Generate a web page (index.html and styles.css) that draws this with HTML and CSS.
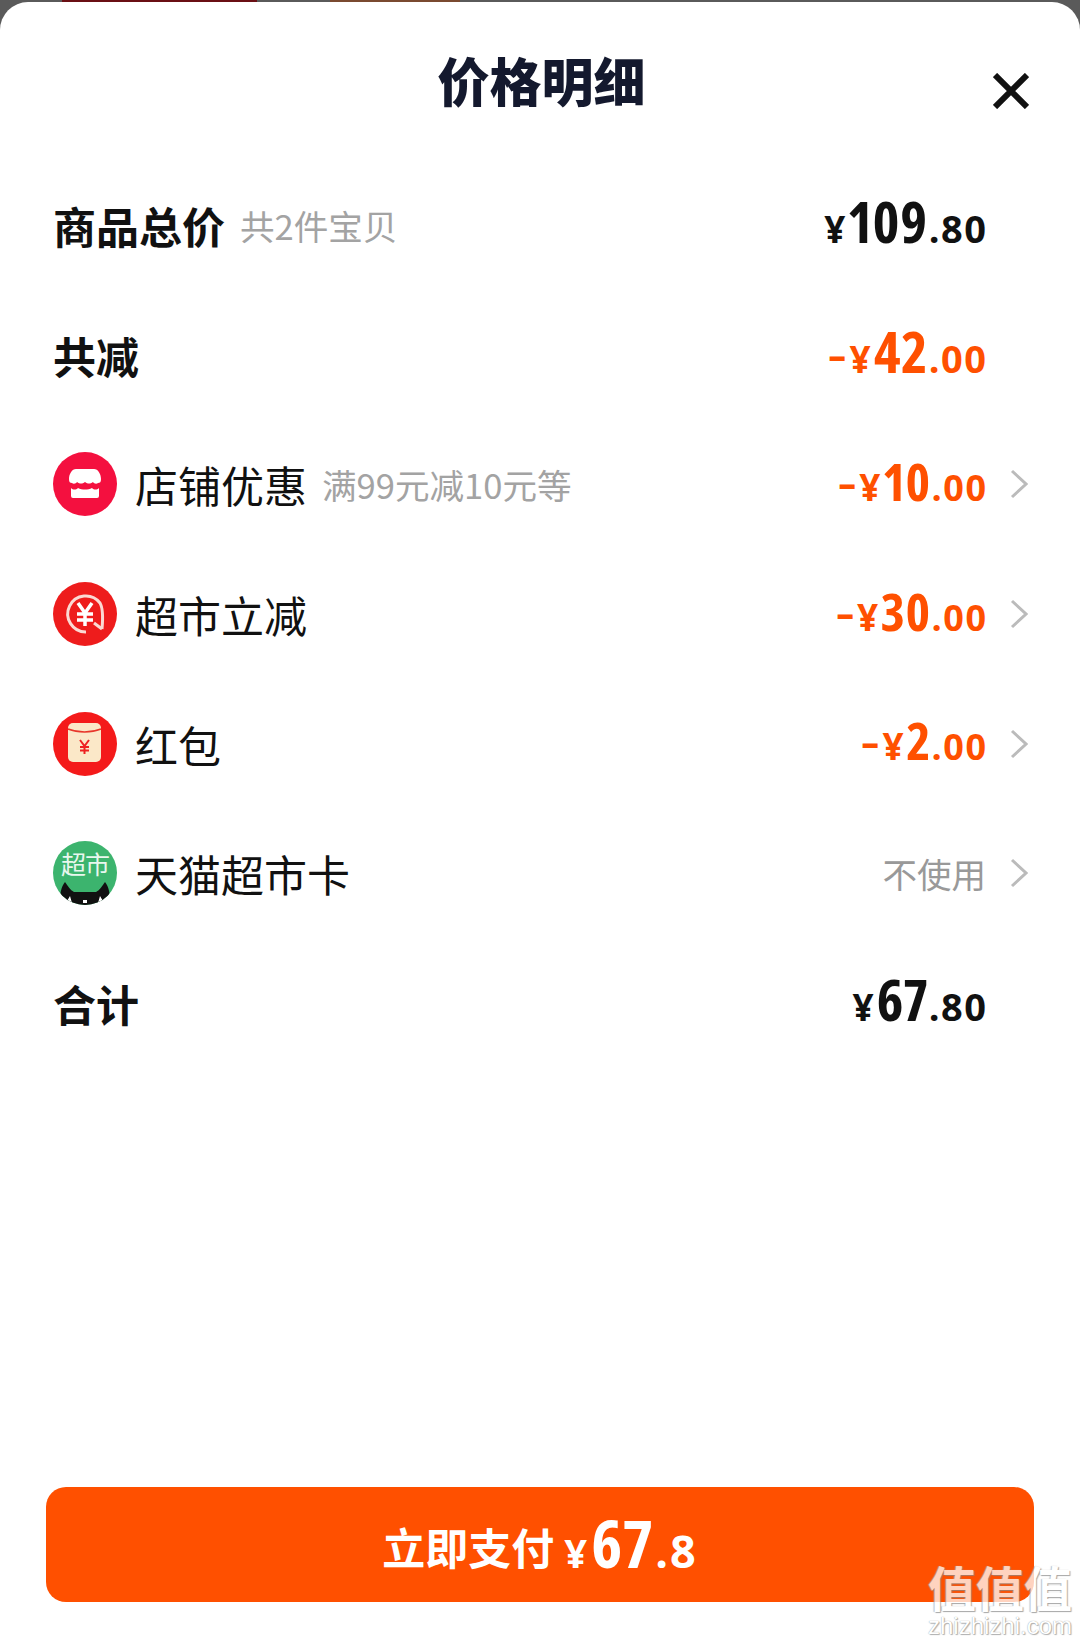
FILE: index.html
```html
<!DOCTYPE html>
<html lang="zh-CN">
<head>
  <meta charset="UTF-8">
  <title>价格明细</title>
  <link rel="stylesheet" href="styles.css">
</head>
<body>
  <div class="backdrop">
    <div class="peek-red"></div>
    <div class="peek-text"></div>
  </div>
  <div class="sheet">
    <div class="header">
      <h2>价格明细</h2>
      <svg class="close" viewBox="0 0 36 36"><path d="M2 2 34 34M34 2 2 34"/></svg>
    </div>

    <div class="row">
      <div class="label bold">商品总价<span class="note first">共2件宝贝</span></div>
      <div class="price"><span class="yen">¥</span><span class="big">109</span><span class="dec">.80</span></div>
    </div>
    <div class="row">
      <div class="label bold">共减</div>
      <div class="price orange"><span class="minus">-</span><span class="yen">¥</span><span class="big">42</span><span class="dec">.00</span></div>
    </div>
    <div class="row">
      <svg class="icon" viewBox="0 0 64 64">
        <circle cx="32" cy="32" r="32" fill="#f4103f"/>
        <path d="M23 17h18c4 0 7 5 7 10 0 3-1 4-3 4-1 1-4 1-5-1-3 2-5 2-8 0-3 2-5 2-8 0-1 2-4 2-5 1-2 0-3-1-3-4 0-5 3-10 7-10z" fill="#fff"/>
        <path d="M18 36c2 2 5 2 7 0 4 2 10 2 14 0 2 2 5 2 7 0v8a2 2 0 0 1-2 2H20a2 2 0 0 1-2-2z" fill="#fff"/>
      </svg>
      <div class="label">店铺优惠<span class="note">满99元减10元等</span></div>
      <div class="price orange mid"><span class="minus">-</span><span class="yen">¥</span><span class="big">10</span><span class="dec">.00</span></div>
      <svg class="arrow" viewBox="0 0 18 30"><path d="M2 2 16 15 2 28"/></svg>
    </div>
    <div class="row">
      <svg class="icon" viewBox="0 0 64 64">
        <circle cx="32" cy="32" r="32" fill="#ee1c1c"/>
        <path d="M33 50a18 18 0 1 1 14-29c3 5 3 15 2 26" fill="none" stroke="#fbd9d3" stroke-width="3"/>
        <path d="M49 47 41 41" fill="none" stroke="#fbd9d3" stroke-width="3"/>
        <path d="M25 21 32 31 39 21M32 31V44M24 32H40M24 38H40" fill="none" stroke="#fff" stroke-width="3.5"/>
      </svg>
      <div class="label">超市立减</div>
      <div class="price orange mid"><span class="minus">-</span><span class="yen">¥</span><span class="big">30</span><span class="dec">.00</span></div>
      <svg class="arrow" viewBox="0 0 18 30"><path d="M2 2 16 15 2 28"/></svg>
    </div>
    <div class="row">
      <svg class="icon" viewBox="0 0 64 64">
        <circle cx="32" cy="32" r="32" fill="#f41a1a"/>
        <rect x="15" y="11" width="33" height="39" rx="5" fill="#fbe8c8"/>
        <path d="M15 17c10 4 23 4 33 0" fill="none" stroke="#e8362a" stroke-width="1.5"/>
        <path d="M27 28 31.5 34 36 28M31.5 34V42M27 35H36M27 38.500H36" fill="none" stroke="#e22" stroke-width="2"/>
      </svg>
      <div class="label">红包</div>
      <div class="price orange mid"><span class="minus">-</span><span class="yen">¥</span><span class="big">2</span><span class="dec">.00</span></div>
      <svg class="arrow" viewBox="0 0 18 30"><path d="M2 2 16 15 2 28"/></svg>
    </div>
    <div class="row">
      <div class="icon market">
        <span class="market-text">超市</span>
        <svg class="cat" viewBox="0 0 64 64"><path d="M7 60c0-7 1-14 5-19 3 4 5 8 9 10h22c4-2 6-6 9-10 4 5 5 12 5 19-3 3-8 4-12 4H19c-4 0-9-1-12-4z" fill="#111"/><path d="M14 60l3-5 2 7zM45 62l2-7 3 5zM30 59h4v3h-4z" fill="#fff"/></svg>
      </div>
      <div class="label">天猫超市卡</div>
      <div class="unused">不使用</div>
      <svg class="arrow" viewBox="0 0 18 30"><path d="M2 2 16 15 2 28"/></svg>
    </div>
    <div class="row">
      <div class="label bold">合计</div>
      <div class="price"><span class="yen">¥</span><span class="big">67</span><span class="dec">.80</span></div>
    </div>

    <div class="pay"><span class="pay-text">立即支付</span><span class="pay-yen">¥</span><span class="pay-big">67</span><span class="pay-dec">.8</span></div>
  </div>

  <div class="mark">
    <div class="mark-cn">值值值</div>
    <div class="mark-en">zhizhizhi.com</div>
  </div>
</body>
</html>
```

FILE: styles.css
```css
body {
  margin: 0;
  padding: 0;
  width: 1080px;
  height: 1644px;
  overflow: hidden;
  position: relative;
  background: #fff;
  color: #111;
  font-family: "Noto Sans CJK SC", "Liberation Sans", sans-serif;
}
.backdrop {
  position: absolute;
  top: 0; left: 0;
  width: 100%;
  height: 30px;
  background: #5a5a5a;
}
.peek-red {
  position: absolute;
  left: 62px;
  width: 195px;
  height: 3px;
  background: #6a0f14;
}
.peek-text {
  position: absolute;
  left: 330px;
  width: 130px;
  height: 2px;
  background: #7a4a30;
}
.sheet {
  position: relative;
  margin-top: 2px;
  height: 1642px;
  box-sizing: border-box;
  background: #fff;
  border-radius: 28px 28px 0 0;
  padding: 0 46px 42px 53px;
  display: flex;
  flex-direction: column;
}
.header {
  height: 158.500px;
  position: relative;
  flex-shrink: 0;
}
h2 {
  margin: 0;
  padding-top: 44px;
  padding-right: 4px;
  text-align: center;
  font-size: 52px;
  line-height: 68px;
  font-weight: 900;
  color: #14192e;
}
.close {
  position: absolute;
  right: 5px;
  top: 71px;
  width: 36px;
  height: 36px;
  fill: none;
  stroke: #111;
  stroke-width: 6;
}
.row {
  display: flex;
  align-items: center;
  height: 129.6px;
  flex-shrink: 0;
}
.icon {
  width: 64px;
  height: 64px;
  margin-right: 18px;
  flex-shrink: 0;
}
.market {
  position: relative;
  border-radius: 50%;
  overflow: hidden;
  background: #3cb46e;
}
.market-text {
  display: block;
  text-align: center;
  font-size: 25px;
  line-height: 44px;
  letter-spacing: -1px;
  color: #e9f7ee;
  font-weight: 400;
}
.cat {
  position: absolute;
  top: 0; left: 0;
  width: 64px;
  height: 64px;
}
.label {
  flex: 1;
  font-size: 43px;
  line-height: 56px;
  display: flex;
  align-items: center;
}
.bold {
  font-weight: 700;
}
.note {
  font-size: 34.6px;
  font-weight: 400;
  color: #a3a3a3;
  margin-left: 15px;
}
.price {
  font-family: "Open Sans", "Roboto", sans-serif;
  font-weight: 700;
  color: #111;
  display: flex;
  align-items: baseline;
  margin-right: 48px;
  line-height: 60px;
}
.orange {
  color: #ff5000;
}
.yen {
  font-size: 37px;
  margin-right: 3px;
}
.minus {
  font-size: 38px;
  margin-left: 3px;
  margin-right: 6px;
  transform: translateY(-4px) scaleX(1.5);
}
.big {
  font-size: 57px;
  font-stretch: 80%;
  font-variant-numeric: proportional-nums;
  letter-spacing: .5px;
}
.dec {
  font-size: 38px;
  font-stretch: 88%;
  letter-spacing: 1.5px;
  margin-left: 1px;
  margin-right: -1.5px;
}
.mid {
  margin-right: 24px;
}
.mid .big {
  font-size: 52px;
  font-stretch: 84%;
}
.mid .dec {
  font-size: 36px;
}
.unused {
  font-size: 34.5px;
  color: #999;
  margin-right: 24px;
}
.arrow {
  width: 18px;
  height: 30px;
  fill: none;
  stroke: #bbb;
  stroke-width: 3;
  margin-right: 6px;
}
.pay {
  margin-top: auto;
  margin-left: -7px;
  height: 115px;
  background: #ff5000;
  border-radius: 20px;
  color: #fff;
  display: flex;
  align-items: baseline;
  justify-content: center;
  font-size: 43px;
  font-weight: 700;
  line-height: 110px;
}
.pay-text {
  transform: translateY(-3px);
}
.pay-yen, .pay-big, .pay-dec {
  font-family: "Open Sans", "Roboto", sans-serif;
}
.pay-yen {
  font-size: 40px;
  margin-left: 10px;
  margin-right: 4px;
}
.pay-big {
  font-size: 66px;
  font-stretch: 84%;
}
.pay-dec {
  font-size: 45px;
  font-stretch: 90%;
  letter-spacing: 2px;
  margin-left: 2px;
}
.mark {
  position: absolute;
  right: 8px;
  bottom: 6px;
  text-align: center;
  color: #fff;
  opacity: .75;
}
.mark-cn {
  font-size: 48px;
  line-height: 56px;
  font-weight: 700;
  text-shadow: 1px 1px 1px #888, -1px 0 1px #aaa;
}
.mark-en {
  font-family: "Liberation Sans", sans-serif;
  font-size: 24px;
  line-height: 24px;
  text-shadow: 0 0 1px #666, 1px 1px 1px #999;
}
```
